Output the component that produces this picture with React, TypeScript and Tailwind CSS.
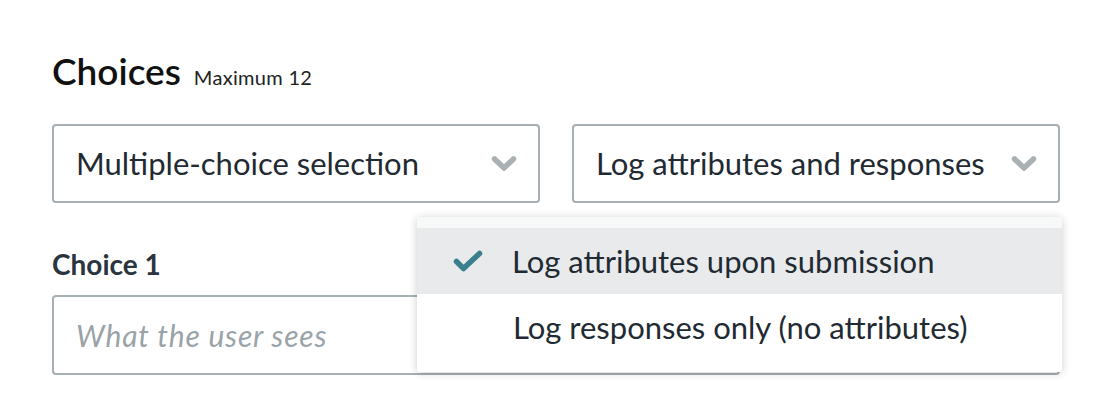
import React from 'react';

const Chevron = () => (
  <svg width="26" height="18" viewBox="0 0 26 18" className="shrink-0">
    <path d="M3.5 4 L13 13 L22.5 4" fill="none" stroke="#a9b1b5" strokeWidth="5.5" strokeLinecap="round" strokeLinejoin="round" />
  </svg>
);

const Check = () => (
  <svg width="30" height="22" viewBox="0 0 30 22">
    <path d="M3.5 11.5 L10.5 18.5 L26.5 3.5" fill="none" stroke="#3b7f8e" strokeWidth="5.5" strokeLinecap="round" strokeLinejoin="round" />
  </svg>
);

export default function App() {
  return (
    <div className="w-[1108px] h-[404px] bg-white overflow-hidden font-['Lato',sans-serif] text-[#1f2a33]">
      <div className="pl-[52px] pr-[48px] pt-[50px]">
        {/* Section title */}
        <div className="flex items-baseline gap-[13px] h-[42px]">
          <h2 className="text-[37px] leading-[42px] font-semibold text-[#111]">Choices</h2>
          <span className="text-[20px] tracking-[0.3px] text-[#222]">Maximum 12</span>
        </div>

        {/* Selects */}
        <div className="grid grid-cols-2 gap-[32px] mt-[32px]">
          <div className="h-[79px] border-2 border-[#a6b0b4] rounded-[4px] flex items-center justify-between pl-[22px] pr-[21px]">
            <span className="text-[31px]">Multiple-choice selection</span>
            <Chevron />
          </div>
          <div className="relative">
            <div className="h-[79px] border-2 border-[#a6b0b4] rounded-[4px] flex items-center justify-between pl-[22px] pr-[21px]">
              <span className="text-[31px]">Log attributes and responses</span>
              <Chevron />
            </div>

            {/* Open dropdown menu */}
            <div className="absolute z-10 top-[93px] right-[-2px] w-[645px] bg-white rounded-[3px] shadow-[0_1px_8px_rgba(0,0,0,0.2)] overflow-hidden">
              <div className="h-[11px] bg-[#f7f8f8]" />
              <div className="h-[66px] bg-[#e9eaec] flex items-center pl-[36px]">
                <Check />
                <span className="ml-[29px] text-[31px]">Log attributes upon submission</span>
              </div>
              <div className="h-[66px] flex items-center pl-[96px]">
                <span className="text-[31px]">Log responses only (no attributes)</span>
              </div>
              <div className="h-[12px]" />
            </div>
          </div>
        </div>

        {/* Choice 1 */}
        <div className="mt-[45px] text-[28px] leading-[32px] font-bold text-[#2b353e]">Choice 1</div>
        <div className="mt-[15px] h-[80px] border-2 border-[#a6b0b4] rounded-[4px] flex items-center pl-[22px]">
          <span className="text-[30px] tracking-[0.8px] italic text-[#9aa3a8]">What the user sees</span>
        </div>
      </div>
    </div>
  );
}
